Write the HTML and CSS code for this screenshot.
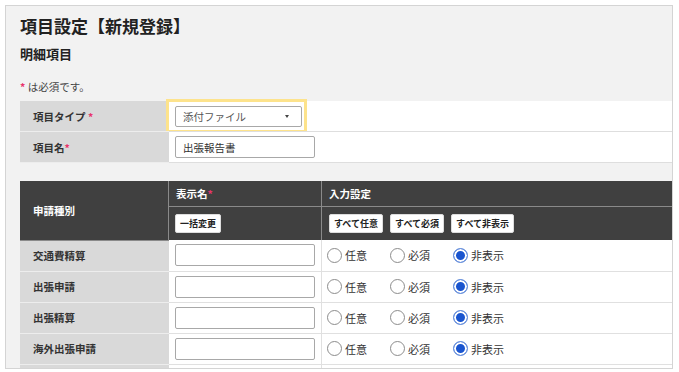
FILE: index.html
```html
<!DOCTYPE html>
<html lang="ja">
<head>
<meta charset="UTF-8" />
<meta name="viewport" content="width=device-width, initial-scale=1" />
<title>項目設定【新規登録】</title>
<link rel="stylesheet" href="styles.css">
</head>
<body>

<div class="page">
  <div class="panel">
    <h1 class="panel-title">項目設定【新規登録】</h1>
    <h2 class="section-title">明細項目</h2>
    <p class="note"><span class="req">*</span> は必須です。</p>

    <table class="form-table">
      <tr>
        <th>項目タイプ <span class="req">*</span></th>
        <td>
          <div class="highlight">
            <div class="select">添付ファイル<span class="caret"></span></div>
          </div>
        </td>
      </tr>
      <tr>
        <th>項目名<span class="req">*</span></th>
        <td><input class="text-input" type="text" value="出張報告書" /></td>
      </tr>
    </table>

    <table class="grid-table">
      <thead>
        <tr class="head-row">
          <th rowspan="2" class="col-kind">申請種別</th>
          <th class="col-name">表示名<span class="req">*</span></th>
          <th>入力設定</th>
        </tr>
        <tr class="tool-row">
          <th class="col-name"><button class="small-btn">一括変更</button></th>
          <th>
            <div class="btn-group">
              <button class="small-btn">すべて任意</button>
              <button class="small-btn">すべて必須</button>
              <button class="small-btn">すべて非表示</button>
            </div>
          </th>
        </tr>
      </thead>
      <tbody id="kind-rows">
        <!-- rows rendered below -->
      </tbody>
    </table>
  </div>
</div>

<script>
// 申請種別ごとの行（パネル下端で切れる行は空のまま）
const kinds = ['交通費精算', '出張申請', '出張精算', '海外出張申請'];
const options = ['任意', '必須', '非表示'];

const tbody = document.getElementById('kind-rows');
kinds.forEach(kind => {
  const tr = document.createElement('tr');
  const radios = options.map((opt, j) => `
    <label class="radio-item">
      <span class="radio${j === 2 ? ' checked' : ''}"></span>${opt}
    </label>`).join('');
  tr.innerHTML = `
    <th>${kind}</th>
    <td class="col-name"><input class="text-input" type="text" /></td>
    <td><div class="radio-group">${radios}</div></td>
  `;
  tbody.appendChild(tr);
});

const filler = document.createElement('tr');
filler.innerHTML = '<th></th><td class="col-name"></td><td></td>';
tbody.appendChild(filler);
</script>

</body>
</html>
```

FILE: styles.css
```css
body {
  margin: 0;
  padding: 0;
  background: #fff;
  font-family: "Noto Sans CJK JP", "Noto Sans", sans-serif;
  color: #333;
}
.page {
  padding: 5px 6px 3px 5px;
}
.panel {
  background: #f2f2f2;
  border: 1px solid #d4d4d4;
  overflow: hidden;
  padding: 8px 0 0 14px;
  box-sizing: border-box;
  height: 364px;
}
.panel-title {
  margin: 0;
  font-size: 17px;
  line-height: 24px;
  font-weight: bold;
  color: #222;
}
.section-title {
  margin: 6px 0 0;
  font-size: 13px;
  line-height: 20px;
  font-weight: bold;
  color: #222;
}
.note {
  margin: 15px 0 0;
  font-size: 10.5px;
  line-height: 16px;
  color: #444;
}
.req {
  color: #e8336b;
  font-weight: bold;
}

/* 上段フォーム */
.form-table {
  margin-top: 6px;
  width: 100%;
  border-collapse: collapse;
}
.form-table th,
.form-table td {
  height: 30px;
  padding: 0;
  border-bottom: 1px solid #dedede;
  font-size: 10.5px;
  vertical-align: middle;
}
.form-table th {
  width: 136px;
  background: #d9d9d9;
  text-align: left;
  padding-left: 13px;
  font-weight: bold;
  color: #333;
  border-bottom-color: #ededed;
}
.form-table td {
  background: #fff;
  padding-left: 6px;
}
.highlight {
  width: fit-content;
  border: 3px solid #fde38c;
  padding: 4px 2px 3px 6px;
  margin: -2px 0 -2px -9px;
  background: #fff;
}
.select {
  height: 19px;
  width: 106px;
  border: 1px solid #a8a8a8;
  border-radius: 2px;
  display: flex;
  align-items: center;
  justify-content: space-between;
  padding: 0 12px 0 7px;
  font-size: 10.5px;
  color: #555;
}
.caret {
  width: 0;
  height: 0;
  border-left: 2.5px solid transparent;
  border-right: 2.5px solid transparent;
  border-top: 3px solid #444;
}
.text-input {
  display: block;
  width: 140px;
  height: 22px;
  box-sizing: border-box;
  border: 1px solid #a8a8a8;
  border-radius: 2px;
  padding: 0 7px;
  font-family: inherit;
  font-size: 10.5px;
  color: #333;
  background: #fff;
}

/* 下段グリッド */
.grid-table {
  margin-top: 18px;
  width: 100%;
  border-collapse: collapse;
  font-size: 10.5px;
}
.grid-table thead th {
  background: #404040;
  color: #fff;
  font-weight: bold;
  text-align: left;
  padding: 0 0 0 7px;
  border-left: 1px solid #8a8a8a;
}
.grid-table thead th.col-kind {
  width: 135px;
  padding-left: 13px;
  border-left: none;
}
.head-row th {
  height: 25px;
  border-bottom: 1px solid #8a8a8a;
}
.tool-row th {
  height: 33px;
}
.grid-table .col-name {
  width: 145px;
}
.tool-row th.col-name {
  padding-left: 6px;
}
.btn-group {
  display: flex;
  gap: 7px;
}
.small-btn {
  font-family: inherit;
  font-size: 9px;
  font-weight: bold;
  color: #222;
  background: #fff;
  border: 1px solid #ddd;
  border-radius: 2px;
  height: 19px;
  padding: 0 4px;
  line-height: 17px;
}
.grid-table tbody th,
.grid-table tbody td {
  height: 30px;
  padding: 0;
  border-bottom: 1px solid #e0e0e0;
  vertical-align: middle;
}
.grid-table tbody th {
  background: #d9d9d9;
  text-align: left;
  padding-left: 13px;
  font-weight: bold;
  color: #333;
  border-bottom-color: #ededed;
}
.grid-table tbody td {
  background: #fff;
}
.grid-table tbody td.col-name {
  padding-left: 6px;
  border-right: 1px solid #e0e0e0;
}
.grid-table tbody td:last-child {
  padding-left: 5px;
}
.radio-group {
  display: flex;
}
.radio-item {
  display: flex;
  align-items: center;
  gap: 3px;
  width: 63px;
  font-size: 11px;
  color: #333;
}
.radio {
  width: 13px;
  height: 13px;
  border: 1px solid #8c8c8c;
  border-radius: 50%;
  background: #fff;
}
.radio.checked {
  border-color: #6b93dc;
  background: #1a55cf;
  box-shadow: inset 0 0 0 2px #fff;
}
```
